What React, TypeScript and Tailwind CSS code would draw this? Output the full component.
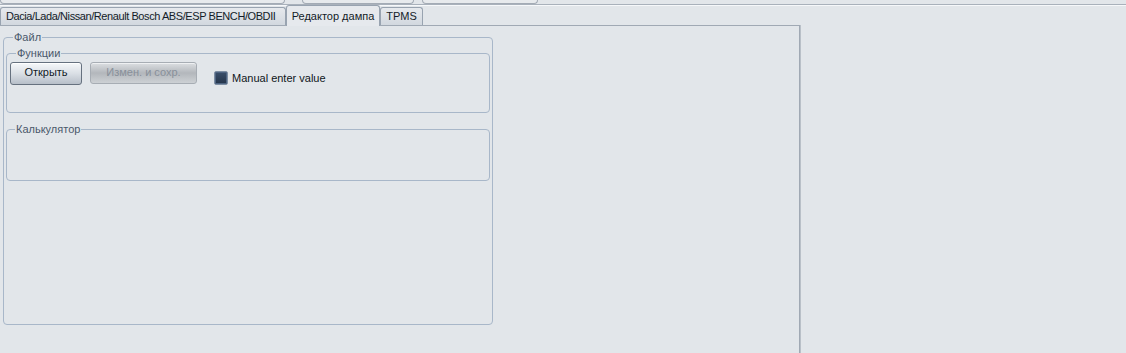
import React from 'react';

const tabBase =
  'flex border border-b-0 border-[#98a3b0] rounded-t-[3px] whitespace-nowrap overflow-hidden';

export default function App() {
  return (
    <div className="w-[1126px] h-[353px] overflow-hidden bg-[#e2e6ea] text-[11px] leading-[13px] text-[#141c28] font-['Liberation_Sans',Arial,sans-serif] flex flex-col">
      {/* bottoms of the toolbar buttons above */}
      <div className="h-[4px] flex shrink-0">
        <div className="w-[285px] h-[4px] rounded-b-[4px] border-x border-b border-[#a3abb5] bg-[#e7eaed]" />
        <div className="ml-[17px] w-[112px] h-[4px] rounded-b-[4px] border-x border-b border-[#a3abb5] bg-[#e7eaed]" />
        <div className="ml-[8px] w-[116px] h-[4px] rounded-b-[4px] border-x border-b border-[#a3abb5] bg-[#e7eaed]" />
      </div>
      <div className="h-px bg-[#a9b1bb] shrink-0" />

      {/* tabs */}
      <div className="h-[20px] shrink-0 flex items-end border-t border-[#f6f8fa]">
        <div className={`${tabBase} w-[286px] h-[18px] pt-[2px] pl-[5px] tracking-[-0.42px] bg-gradient-to-b from-[#e6e9ed] to-[#d2d8df]`}>
          Dacia/Lada/Nissan/Renault Bosch ABS/ESP BENCH/OBDII
        </div>
        <div className={`${tabBase} justify-center relative z-10 -mb-px w-[94px] h-[21px] pt-[4px] bg-[#e6e9ed]`}>
          Редактор дампа
        </div>
        <div className={`${tabBase} justify-center w-[43px] h-[18px] pt-[2px] bg-gradient-to-b from-[#e6e9ed] to-[#d2d8df]`}>
          TPMS
        </div>
      </div>

      {/* tab page */}
      <div className="w-[800px] flex-1 border-t border-r border-[#a0a9b4] shadow-[1px_0_0_#b9c0c8]">
        <fieldset className="ml-[3px] mt-[5px] w-[490px] h-[294px] border border-[#a8b7c9] rounded-[4px] px-[2px]">
          <legend className="ml-[7px] px-[1px] text-[#4a586b]">Файл</legend>

          <fieldset className="mt-[3px] w-[484px] h-[66px] border border-[#a8b7c9] rounded-[4px] pl-[3px]">
            <legend className="ml-[6px] px-[1px] text-[#4a586b]">Функции</legend>
            <div className="mt-[2px] flex items-start">
              <button className="w-[72px] h-[23px] pb-[2px] flex items-center justify-center rounded-[3px] border border-[#66717f] bg-gradient-to-b from-[#f6f8fa] via-[#dadfe5] to-[#b7bfc9] shadow-[inset_0_1px_0_#ffffff] text-[#121a26]">
                Открыть
              </button>
              <button
                disabled
                className="ml-[8px] w-[107px] h-[22px] pb-[2px] flex items-center justify-center rounded-[3px] border border-[#a7adb4] bg-gradient-to-b from-[#dcdfe2] via-[#b3b7bc] to-[#cdd1d5] shadow-[inset_0_1px_0_#eef0f2] text-[#88909a]"
              >
                Измен. и сохр.
              </button>
              <label className="ml-[17px] mt-[9px] h-[14px] flex items-center gap-[4px] text-[#0f1621]">
                <span className="w-[14px] h-[14px] rounded-[2px] border border-[#7d8ea3] bg-gradient-to-b from-[#3a4f6b] to-[#24344a] shadow-[inset_0_0_0_1px_#4e6482]" />
                Manual enter value
              </label>
            </div>
          </fieldset>

          <fieldset className="mt-[10px] w-[484px] h-[58px] border border-[#a8b7c9] rounded-[4px] pl-[3px]">
            <legend className="ml-[5px] px-[1px] text-[#4a586b]">Калькулятор</legend>
          </fieldset>
        </fieldset>
      </div>
    </div>
  );
}
